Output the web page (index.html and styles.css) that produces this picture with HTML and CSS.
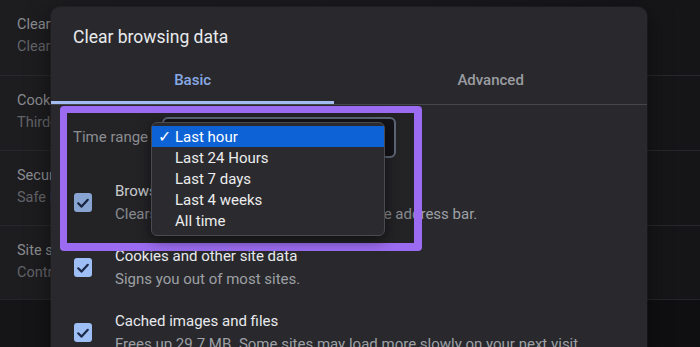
FILE: index.html
```html
<!DOCTYPE html>
<html>
<head>
<meta charset="utf-8">
<link rel="stylesheet" href="styles.css">
</head>
<body>
<div class="page">
  <div class="settings">
    <div class="srow">
      <div class="stitle">Clear browsing data</div>
      <div class="ssub">Clear history, cookies, cache, and more</div>
    </div>
    <div class="srow">
      <div class="stitle">Cookies and other site data</div>
      <div class="ssub">Third-party cookies are blocked in Incognito mode</div>
    </div>
    <div class="srow">
      <div class="stitle">Security</div>
      <div class="ssub">Safe Browsing (protection from dangerous sites) and other security settings</div>
    </div>
    <div class="srow">
      <div class="stitle">Site settings</div>
      <div class="ssub">Controls what information sites can use and show</div>
    </div>
  </div>

  <div class="dialog">
    <div class="dtitle">Clear browsing data</div>
    <div class="tabs">
      <div class="tab active"><span class="tab-label">Basic</span></div>
      <div class="tab"><span class="tab-label">Advanced</span></div>
    </div>
    <div class="dbody">
      <div class="range-row">
        <span class="range-label">Time range</span>
        <div class="select"></div>
      </div>
      <div class="item">
        <span class="cb"><svg viewBox="0 0 18 18" width="18" height="18"><path d="M4.2 9.3 L7.6 12.6 L13.8 5.8" fill="none" stroke="#1b2a48" stroke-width="2.2" stroke-linecap="round" stroke-linejoin="round"/></svg></span>
        <div class="itext">
          <div class="ititle">Browsing history</div>
          <div class="isub">Clears history and autocompletions in the address bar.</div>
        </div>
      </div>
      <div class="item">
        <span class="cb"><svg viewBox="0 0 18 18" width="18" height="18"><path d="M4.2 9.3 L7.6 12.6 L13.8 5.8" fill="none" stroke="#1b2a48" stroke-width="2.2" stroke-linecap="round" stroke-linejoin="round"/></svg></span>
        <div class="itext">
          <div class="ititle">Cookies and other site data</div>
          <div class="isub">Signs you out of most sites.</div>
        </div>
      </div>
      <div class="item">
        <span class="cb"><svg viewBox="0 0 18 18" width="18" height="18"><path d="M4.2 9.3 L7.6 12.6 L13.8 5.8" fill="none" stroke="#1b2a48" stroke-width="2.2" stroke-linecap="round" stroke-linejoin="round"/></svg></span>
        <div class="itext">
          <div class="ititle">Cached images and files</div>
          <div class="isub">Frees up 29.7 MB. Some sites may load more slowly on your next visit.</div>
        </div>
      </div>
    </div>

    <div class="highlight"></div>

    <div class="menu">
      <div class="mitem selected"><span class="mcheck">✓</span>Last hour</div>
      <div class="mitem"><span class="mcheck"></span>Last 24 Hours</div>
      <div class="mitem"><span class="mcheck"></span>Last 7 days</div>
      <div class="mitem"><span class="mcheck"></span>Last 4 weeks</div>
      <div class="mitem"><span class="mcheck"></span>All time</div>
    </div>
  </div>
</div>
</body>
</html>
```

FILE: styles.css
```css
* { box-sizing: border-box; }

html, body {
  margin: 0;
  padding: 0;
}

body {
  width: 700px;
  height: 347px;
  overflow: hidden;
  background: linear-gradient(to right, #151518, #0f0f12);
  font-family: Roboto, "Liberation Sans", sans-serif;
}

.page {
  position: relative;
  width: 700px;
  height: 347px;
}

.settings {
  width: 700px;
  height: 300px;
  background: linear-gradient(to right, #1d1d20 0%, #1a1a1d 60%, #151518 100%);
  border-bottom: 1px solid #26262a;
}

.srow {
  height: 75px;
  padding: 0 0 3px 17px;
  display: flex;
  flex-direction: column;
  justify-content: center;
  border-top: 1px solid #28282c;
  white-space: nowrap;
  overflow: hidden;
}

.srow:first-child {
  border-top: none;
}

.stitle {
  font-size: 14.5px;
  line-height: 22px;
  color: #8b8c90;
}

.ssub {
  font-size: 14.5px;
  line-height: 22px;
  color: #636468;
}

.dialog {
  position: absolute;
  left: 51px;
  top: 7px;
  width: 596px;
  height: 370px;
  background: #29292d;
  border-radius: 9px;
  box-shadow: 0 0 0 1px rgba(255, 255, 255, 0.035), 0 6px 24px rgba(0, 0, 0, 0.5);
}

.dtitle {
  padding: 18px 22px 0;
  font-size: 17.5px;
  line-height: 24px;
  color: #e8eaed;
}

.tabs {
  margin-top: 9px;
  display: flex;
  border-bottom: 1px solid #45454a;
}

.tab {
  flex: 1 1 auto;
  height: 46px;
  display: flex;
  align-items: center;
  justify-content: center;
  border-bottom: 3px solid transparent;
  font-size: 15px;
  font-weight: 500;
  color: #9a9ca1;
}

.tab.active {
  color: #88a9e6;
  border-bottom-color: #a3bdf0;
}

.dbody {
  padding: 12px 0 0 0;
}

.range-row {
  display: flex;
  align-items: center;
  padding-left: 22px;
  gap: 14px;
  height: 40px;
}

.range-label {
  width: 75px;
  font-size: 15px;
  color: #a2a4a9;
  white-space: nowrap;
}

.select {
  width: 234px;
  height: 41px;
  background: #18181c;
  border: 2px solid #6c778a;
  border-radius: 6px;
}

.item {
  height: 65px;
  display: flex;
  align-items: center;
  padding-left: 23px;
  gap: 23px;
}

.range-row + .item {
  margin-top: 13px;
}

.cb {
  width: 18px;
  height: 19px;
  flex: none;
  border-radius: 3px;
  background: #9ebff6;
  display: flex;
  align-items: center;
  justify-content: center;
}

.cb svg {
  display: block;
}

.itext {
  white-space: nowrap;
}

.ititle {
  font-size: 15px;
  line-height: 23px;
  color: #e8eaed;
}

.isub {
  font-size: 15px;
  line-height: 23px;
  color: #9ea0a5;
}

.highlight {
  position: absolute;
  left: 9px;
  top: 99px;
  width: 362px;
  height: 145px;
  border: 7px solid #9b6cf1;
  border-width: 7px 8px 8px 7px;
  border-radius: 4px;
  background: rgba(0, 0, 0, 0.14);
}

.menu {
  position: absolute;
  left: 100px;
  top: 115px;
  width: 234px;
  height: 114px;
  padding: 3px 0;
  background: #2b2b2f;
  border: 1px solid #4a4a4f;
  border-radius: 6px;
  box-shadow: 0 4px 14px rgba(0, 0, 0, 0.55);
}

.mitem {
  height: 21px;
  display: flex;
  align-items: center;
  font-size: 15px;
  color: #ededee;
  white-space: nowrap;
}

.mitem.selected {
  background: #0d63d6;
  color: #ffffff;
}

.mcheck {
  width: 23px;
  padding-left: 6px;
  font-size: 16px;
  line-height: 1;
}
```
